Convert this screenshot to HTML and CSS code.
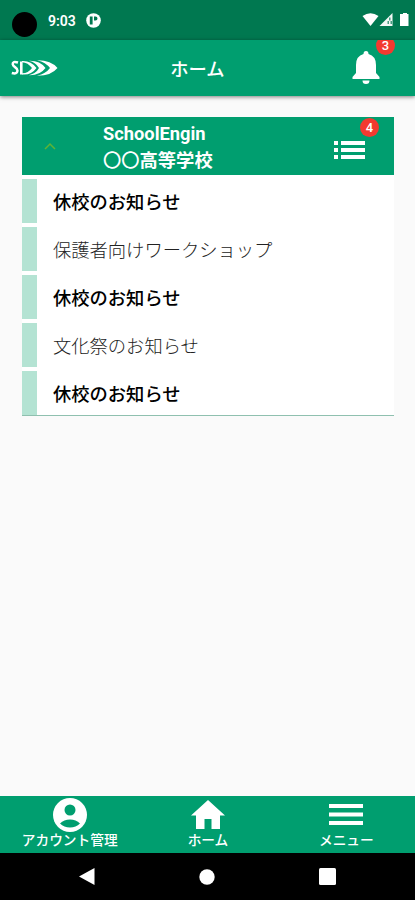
FILE: index.html
```html
<!DOCTYPE html>
<html lang="ja">
<head>
  <meta charset="UTF-8">
  <title>ホーム</title>
  <link rel="stylesheet" href="styles.css">
</head>
<body>

  <!-- ステータスバー -->
  <div class="status">
    <span class="camera"></span>
    <span class="clock">9:03</span>
    <svg class="app-icon" width="15" height="15" viewBox="0 0 15 15">
      <circle cx="7.5" cy="7.5" r="7.3" fill="#fff"/>
      <path d="M3.800 3.500h2.800v8H3.800zM8 3.500h1.500Q11.500 3.500 11.500 5.500T9.500 7.500H8z" fill="#007850"/>
    </svg>
    <svg class="signals" width="47" height="16" viewBox="0 0 47 16">
      <path d="M0.500 4Q8.500-1.500 16.500 4L8.500 14z" fill="#fff"/>
      <path d="M17.500 14L30.500 1V14z" fill="#fff" fill-opacity=".95"/>
      <path d="M27 5.500h1.500v3H27zM25.500 9h1.500v3h-1.500zM28.500 9H30v3h-1.500z" fill="#007850" fill-opacity=".7"/>
      <path d="M39 2h2V1h4v1h1.500v12H38V2z" fill="#fff"/>
    </svg>
  </div>

  <header class="header">
    <svg class="logo" width="47" height="16" viewBox="0 0 47 16">
      <path d="M7 2.500Q1.500.800 1.700 4.200C2 7.300 6.500 7 6.500 10.700Q6.200 14.500.800 13" fill="none" stroke="#fff" stroke-width="2.500"/>
      <path d="M9 1.500h2.600v13H9z" fill="#fff"/>
      <path d="M11 1Q20 .500 25.500 8Q20 15.500 11 14.500V13.300Q17 13.500 21 8Q17 2.500 11 2.200z" fill="#fff"/>
      <path d="M18 .800Q29 .500 34.500 8Q29 15.500 18 15.200Q25 13.500 28 8Q25 2.500 18 .800z" fill="#fff"/>
      <path d="M26 .200Q40 0 46.500 8Q40 16 26 15.800Q35 13.500 39 8Q35 2.500 26 .200z" fill="#fff"/>
    </svg>
    <h1>ホーム</h1>
    <div class="bell">
      <svg width="28" height="34" viewBox="0 0 28 34">
        <path d="M14 0Q16.500 0 16.500 3Q24 5 24 14V22L27.500 26V28H.500V26L4 22V14Q4 5 11.500 3Q11.500 0 14 0zM10.500 29.500h7Q17.500 33 14 33Q10.500 33 10.500 29.500z" fill="#fff"/>
      </svg>
      <span class="badge">3</span>
    </div>
  </header>

  <main>
    <section class="card">
      <div class="school">
        <svg class="arrow" width="12" height="8" viewBox="0 0 12 8">
          <path d="M1 7L6 2L11 7" fill="none" stroke="#5fb336" stroke-width="1.500"/>
        </svg>
        <div class="school-name">SchoolEngin<br><span class="circles">〇〇</span>高等学校</div>
        <div class="list-icon">
          <svg width="31" height="18" viewBox="0 0 31 18">
            <path d="M0 0h4v4H0zM7 0h24v4H7zM0 7h4v4H0zM7 7h24v4H7zM0 14h4v4H0zM7 14h24v4H7z" fill="#fff"/>
          </svg>
          <span class="badge">4</span>
        </div>
      </div>
      <ul class="news">
        <li class="unread">休校のお知らせ</li>
        <li>保護者向けワークショップ</li>
        <li class="unread">休校のお知らせ</li>
        <li>文化祭のお知らせ</li>
        <li class="unread">休校のお知らせ</li>
      </ul>
    </section>
  </main>

  <!-- 下部メニュー -->
  <nav class="tabs">
    <a class="tab">
      <svg width="34" height="34" viewBox="0 0 34 34">
        <circle cx="17" cy="17" r="17" fill="#fff"/>
        <circle cx="17" cy="12" r="5.500" fill="#009e6f"/>
        <path d="M7 25.500Q11 21.500 17 21.500T27 25.500Q23 29.500 17 29.500T7 25.500z" fill="#009e6f"/>
      </svg>
      <span>アカウント管理</span>
    </a>
    <a class="tab">
      <svg width="34" height="34" viewBox="0 0 34 34">
        <path d="M17 2L34 17.500H29V31H20.500V21H13.500V31H5V17.500H0z" fill="#fff"/>
      </svg>
      <span>ホーム</span>
    </a>
    <a class="tab">
      <svg width="34" height="34" viewBox="0 0 34 34">
        <path d="M0 6h34v4H0zM0 14.500h34v4H0zM0 23h34v4H0z" fill="#fff"/>
      </svg>
      <span>メニュー</span>
    </a>
  </nav>

  <div class="android">
    <svg width="16" height="17" viewBox="0 0 16 17"><path d="M0 8.500L15.500 0V17z" fill="#fff"/></svg>
    <svg width="16" height="16" viewBox="0 0 16 16"><circle cx="8" cy="8" r="7.700" fill="#fff"/></svg>
    <svg width="17" height="17" viewBox="0 0 17 17"><rect width="17" height="17" rx="1.500" fill="#fff"/></svg>
  </div>

</body>
</html>
```
FILE: styles.css
```css
* { box-sizing: border-box; }
body {
  margin: 0;
  height: 900px;
  display: flex;
  flex-direction: column;
  background-color: #fafafa;
  color: white;
  font-family: Roboto, "Noto Sans CJK JP", sans-serif;
  overflow: hidden;
}
svg { display: block; flex: none; }

.status {
  height: 40px;
  display: flex;
  align-items: center;
  padding: 0 6px 0 12px;
  background-color: #007850;
}
.camera {
  width: 25px;
  height: 25px;
  margin-top: 8px;
  border-radius: 50%;
  background-color: black;
}
.clock {
  width: 28px;
  margin: 2px 0 0 11px;
  font-size: 14px;
  font-weight: 600;
}
.app-icon { margin-left: 10px; }
.signals { margin-left: auto; }

.header {
  height: 56px;
  display: grid;
  grid-template-columns: 1fr auto 1fr;
  align-items: center;
  padding: 0 35px 0 11px;
  background-color: #009e6f;
  box-shadow: 0 1px 4px rgba(0, 0, 0, 0.5);
}
.header h1 {
  margin: 3px 0 0;
  padding-left: 4px;
  justify-self: center;
  font-size: 18.3px;
  font-weight: 500;
  line-height: 28px;
}
.bell {
  position: relative;
  justify-self: end;
}
.badge {
  position: absolute;
  width: 19px;
  height: 19px;
  border-radius: 50%;
  background-color: #f33a30;
  font-size: 13px;
  font-weight: 500;
  line-height: 19px;
  text-align: center;
}
.bell .badge {
  top: -15px;
  left: 24px;
  clip-path: inset(4px 0 0 0);
}

main { flex: 1; padding: 21px 21px 0 21.5px; }
.card {
  background-color: white;
  border-bottom: 1px solid #8fc0af;
}
.school {
  height: 57.5px;
  display: flex;
  align-items: center;
  padding: 0 29.5px 0 22px;
  background-color: #009e6f;
}
.school-name {
  margin: 2px 0 0 47.5px;
  font-size: 18.3px;
  font-weight: 700;
  line-height: 27px;
}
.circles { font-weight: 500; }
.list-icon {
  position: relative;
  margin: 8px 0 0 auto;
}
.list-icon .badge { top: -23px; left: 26.5px; }

.news {
  margin: 0;
  padding: 4px 0 0;
  list-style: none;
  display: grid;
  gap: 4px;
}
.news li {
  height: 44px;
  padding-left: 16.5px;
  border-left: 15px solid #b4e3d3;
  color: #222;
  font-size: 18.3px;
  font-weight: 300;
  line-height: 48px;
}
.news .unread {
  color: black;
  font-weight: 500;
}

.tabs {
  height: 57px;
  display: grid;
  grid-template-columns: repeat(3, 1fr);
  background-color: #009e6f;
}
.tab {
  display: flex;
  flex-direction: column;
  align-items: center;
  padding: 2px 0 0 1px;
  font-size: 13.7px;
  font-weight: 500;
  line-height: 16px;
}

.android {
  height: 47px;
  display: flex;
  justify-content: space-between;
  align-items: center;
  padding: 0 79px;
  background-color: black;
}
```
